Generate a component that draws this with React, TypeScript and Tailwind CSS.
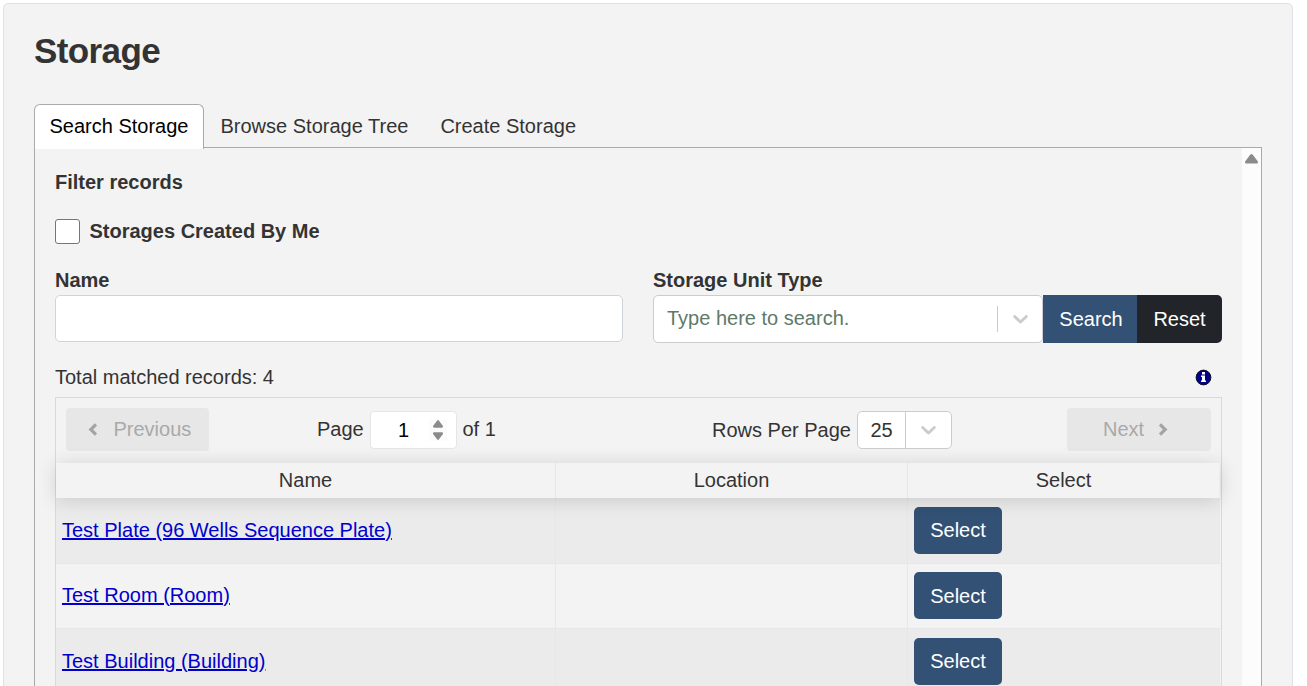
import React from "react";

const ROWS = [
  { name: "Test Plate (96 Wells Sequence Plate)", cls: "h-[66px] bg-[#ebebeb] pt-[9px]", btn: "pb-[2px]" },
  { name: "Test Room (Room)", cls: "h-[65px] pt-[8px]", btn: "" },
  { name: "Test Building (Building)", cls: "h-[66px] bg-[#ebebeb] pt-[9px]", btn: "pb-[2px]" },
];

function SelectArrow() {
  return (
    <svg className="-mt-px" width="25" height="25" viewBox="0 0 20 20" fill="#cccccc" aria-hidden="true">
      <path d="M4.516 7.548c0.436-0.446 1.043-0.481 1.576 0l3.908 3.747 3.908-3.747c0.533-0.481 1.141-0.446 1.574 0 0.436 0.445 0.408 1.197 0 1.615-0.406 0.418-4.695 4.502-4.695 4.502-0.217 0.223-0.502 0.335-0.787 0.335s-0.57-0.112-0.789-0.335c0 0-4.287-4.084-4.695-4.502s-0.436-1.17 0-1.615z" />
    </svg>
  );
}

function Chevron({ right = false }: { right?: boolean }) {
  return (
    <svg width="10" height="13" viewBox="0 0 10 13" fill="none" stroke="#a4a4a4" strokeWidth="3.2" aria-hidden="true">
      <path d={right ? "M2 1.300 7.200 6.500 2 11.700" : "M8 1.300 2.800 6.500 8 11.700"} />
    </svg>
  );
}

function InfoIcon() {
  return (
    <svg className="mr-[10px] mt-px" width="17" height="17" viewBox="0 0 17 17" aria-hidden="true">
      <circle cx="8.500" cy="8.500" r="7.400" fill="#00008b" stroke="#10102a" strokeWidth="1" />
      <rect x="7" y="3" width="3" height="2.500" fill="#fff" />
      <path d="M6 6.500h4v5h1V13H6v-1.500h1V8H6z" fill="#fff" />
    </svg>
  );
}

function Triangle({ down = false, className = "" }: { down?: boolean; className?: string }) {
  return (
    <svg
      className={className + (down ? " rotate-180" : "")}
      viewBox="0 0 12 10"
      preserveAspectRatio="none"
      fill="#8b8b8b"
      aria-hidden="true"
    >
      <path d="M4.800 .8a1.600 1.600 0 0 1 2.400 0l4.500 6.400c.6 1.200 .2 2.400-1.200 2.400H1.500C.1 9.600-.3 8.400.3 7.200z" />
    </svg>
  );
}

function Tabs() {
  return (
    <div className="relative z-10 -mb-[2px] flex h-[45px] leading-[30px]">
      <div className="w-[170px] rounded-t-[6px] border border-b-0 border-[#aaa] bg-white pl-[14.5px] pt-[6px] text-black">
        Search Storage
      </div>
      <div className="pl-[16.5px] pt-[7px]">Browse Storage Tree</div>
      <div className="pl-[32px] pt-[7px]">Create Storage</div>
    </div>
  );
}

function Filters() {
  return (
    <>
      <div className="font-bold">Filter records</div>
      <div className="mt-[19px] flex items-center font-bold">
        <span className="h-[25px] w-[25px] rounded-[3px] border border-[#767676] bg-white" />
        <span className="ml-[9.5px]">Storages Created By Me</span>
      </div>
      <div className="mt-[19px] flex gap-[30px]">
        <div className="w-[568px]">
          <div className="font-bold">Name</div>
          <div className="h-[47px] rounded-[5px] border border-[#ced4da] bg-white" />
        </div>
        <div className="flex-1">
          <div className="font-bold">Storage Unit Type</div>
          <div className="flex h-[48px]">
            <div className="flex w-[390px] items-center rounded-[5px] border border-[#ccc] bg-white">
              <span className="flex-1 pl-[13px] pb-[2px] text-[#5f7a68]">Type here to search.</span>
              <span className="h-[26px] w-px bg-[#ccc]" />
              <span className="flex w-[44px] justify-center pl-px">
                <SelectArrow />
              </span>
            </div>
            <button className="w-[94px] bg-[#325174] pl-[2px] text-white">Search</button>
            <button className="w-[85px] rounded-r-[5px] bg-[#212529] text-white">Reset</button>
          </div>
        </div>
      </div>
    </>
  );
}

function Pagination() {
  return (
    <div className="flex h-[65px] items-center pb-px pl-[10px] pr-[10px]">
      <button className="-mt-px flex h-[43px] w-[143px] items-center rounded-[4px] bg-[#e7e7e7] pl-[22px] text-[#a9a9a9]">
        <Chevron />
        <span className="-mt-[2px] ml-[15.5px]">Previous</span>
      </button>
      <span className="ml-[108px] -mt-[3px] w-[53px]">Page</span>
      <div className="flex h-[38px] w-[87px] items-center rounded-[4px] border border-[#e6e6e6] bg-white text-black">
        <span className="ml-[27px] w-[31px]">1</span>
        <span className="flex h-[22px] w-[18px] flex-col items-center justify-between bg-[#fcfcfc] py-px">
          <Triangle className="h-[8px] w-[10px]" />
          <Triangle down className="h-[8px] w-[10px]" />
        </span>
      </div>
      <span className="ml-[5.5px] -mt-[3px]">of 1</span>
      <span className="ml-auto mr-[6px]">Rows Per Page</span>
      <div className="mr-[115px] flex h-[38px] w-[95px] items-center rounded-[5px] border border-[#ccc] bg-white">
        <span className="w-[47px] text-center">25</span>
        <span className="h-full w-px bg-[#ccc]" />
        <span className="flex flex-1 justify-center">
          <SelectArrow />
        </span>
      </div>
      <button className="-mt-px flex h-[43px] w-[144px] items-center rounded-[4px] bg-[#e7e7e7] pl-[36px] text-[#a9a9a9]">
        <span className="-mt-[2px] mr-[14px]">Next</span>
        <Chevron right />
      </button>
    </div>
  );
}

export default function App() {
  return (
    <div className="h-[686px] overflow-hidden bg-white pl-[3px] pt-[3px] font-['Liberation_Sans',Arial,sans-serif] text-[20px] leading-[30px] text-[#333]">
      <div className="h-[720px] w-[1290px] rounded-[5px] border border-[#dee2e6] bg-[#f3f3f3] px-[30px] pt-[26px]">
        <h1 className="h-[74px] text-[35px] font-bold leading-[42px] tracking-[-0.6px]">Storage</h1>
        <Tabs />
        <div className="flex h-[600px] border border-[#aaa]">
          <main className="w-[1207px] px-[20px] pt-[19px]">
            <Filters />
            <div className="mt-[19px] flex h-[30px] items-center justify-between">
              <span>Total matched records: 4</span>
              <InfoIcon />
            </div>
            <div className="mt-[5px] border border-[#d9d9d9]">
              <Pagination />
              <div className="relative z-10 mr-px grid h-[35px] grid-cols-[500px_352px_312px] bg-[#f3f3f3] text-center leading-[34px] shadow-[0_2px_19px_0_rgba(0,0,0,0.15)]">
                <span className="border-r border-[#e6e6e6]">Name</span>
                <span className="border-r border-[#e6e6e6]">Location</span>
                <span className="border-r border-[#ededed]">Select</span>
              </div>
              {ROWS.map((r) => (
                <div
                  key={r.name}
                  className={"mr-px grid grid-cols-[500px_352px_312px] border-b border-[#e7e7e7] " + r.cls}
                >
                  <div className="-mt-[9px] border-r border-[#e7e7e7] pl-[6px] pt-[17px]">
                    <a className="text-[#0000cd] underline">{r.name}</a>
                  </div>
                  <div className="-mt-[9px] border-r border-[#e7e7e7]" />
                  <div className="pl-[6px]">
                    <button className={"block h-[47px] w-[88px] rounded-[5px] bg-[#325174] text-white " + r.btn}>
                      Select
                    </button>
                  </div>
                </div>
              ))}
            </div>
          </main>
          <div className="flex w-[19px] justify-center bg-[#fcfcfc] pt-[6px]">
            <Triangle className="h-[10px] w-[13px]" />
          </div>
        </div>
      </div>
    </div>
  );
}
